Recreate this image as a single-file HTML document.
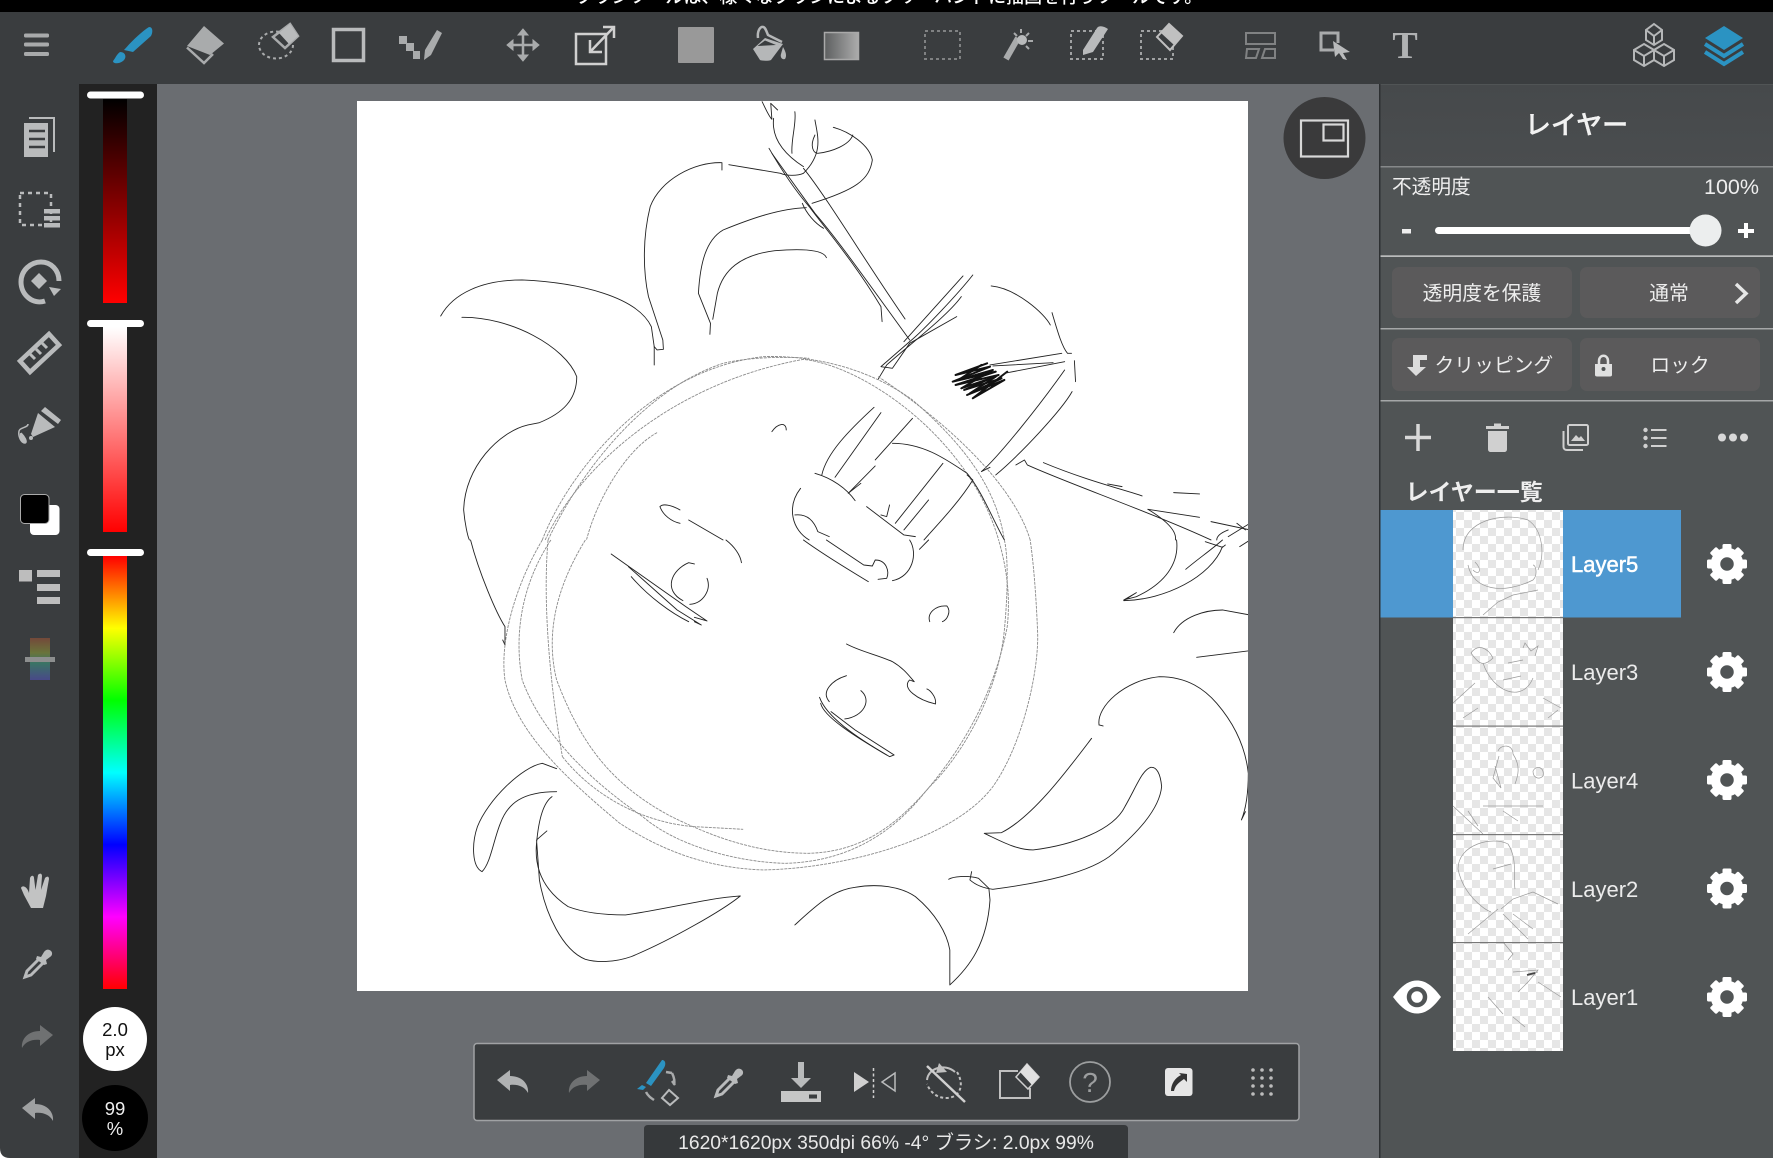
<!DOCTYPE html>
<html lang="ja"><head><meta charset="utf-8"><title>MediBang Paint</title>
<style>
html,body{margin:0;padding:0;background:#6a6d71;width:1773px;height:1158px;overflow:hidden}
svg{display:block;font-family:"Liberation Sans","Noto Sans CJK JP",sans-serif}
.sk path{vector-effect:non-scaling-stroke;fill:none;stroke:#222;stroke-width:.9;stroke-linecap:round;stroke-linejoin:round}
.sk path.g{stroke:#8a8a8a;stroke-width:.9;stroke-dasharray:3 1;stroke-linecap:butt}
.th path{fill:none;stroke:#9a9a9a;stroke-width:.7}
.ic{fill:#b9bbbc;stroke:none}
.ol{fill:none;stroke:#b9bbbc;stroke-width:3}
</style></head><body>
<svg width="1773" height="1158" viewBox="0 0 1773 1158" xmlns="http://www.w3.org/2000/svg">
<defs>
<linearGradient id="g1" x1="0" y1="0" x2="0" y2="1"><stop offset="0" stop-color="#000"/><stop offset="1" stop-color="#f00"/></linearGradient>
<linearGradient id="g2" x1="0" y1="0" x2="0" y2="1"><stop offset="0" stop-color="#fff"/><stop offset="1" stop-color="#f00"/></linearGradient>
<linearGradient id="g3" x1="0" y1="0" x2="0" y2="1"><stop offset="0" stop-color="#f00"/><stop offset=".1667" stop-color="#ff0"/><stop offset=".3333" stop-color="#0f0"/><stop offset=".5" stop-color="#0ff"/><stop offset=".6667" stop-color="#00f"/><stop offset=".8333" stop-color="#f0f"/><stop offset="1" stop-color="#f00"/></linearGradient>
<linearGradient id="g4" x1="0" y1="0" x2="0" y2="1"><stop offset="0" stop-color="#7a4a3a"/><stop offset=".35" stop-color="#6f7a3a"/><stop offset=".6" stop-color="#3a7a6a"/><stop offset="1" stop-color="#4a4a90"/></linearGradient>
<linearGradient id="g5" x1="0" y1="0" x2="1" y2="0"><stop offset="0" stop-color="#5d5f60"/><stop offset="1" stop-color="#acacac"/></linearGradient>
<linearGradient id="tb" x1="0" y1="0" x2="0" y2="1"><stop offset="0" stop-color="#46494b"/><stop offset="1" stop-color="#4a4d4f"/></linearGradient>
<pattern id="chk" width="16" height="16" patternUnits="userSpaceOnUse"><rect width="16" height="16" fill="#fff"/><rect width="8" height="8" fill="#e6e6e6"/><rect x="8" y="8" width="8" height="8" fill="#e6e6e6"/></pattern>
<clipPath id="cv"><rect x="357" y="101" width="891" height="890"/></clipPath>
<g id="gear" fill="#fff"><circle r="11.5" fill="none" stroke="#fff" stroke-width="9.5"/>
<rect x="-4.5" y="-20" width="9" height="7" rx="1.5"/><rect x="-4.5" y="-20" width="9" height="7" rx="1.5" transform="rotate(45)"/><rect x="-4.5" y="-20" width="9" height="7" rx="1.5" transform="rotate(90)"/><rect x="-4.5" y="-20" width="9" height="7" rx="1.5" transform="rotate(135)"/><rect x="-4.5" y="-20" width="9" height="7" rx="1.5" transform="rotate(180)"/><rect x="-4.5" y="-20" width="9" height="7" rx="1.5" transform="rotate(225)"/><rect x="-4.5" y="-20" width="9" height="7" rx="1.5" transform="rotate(270)"/><rect x="-4.5" y="-20" width="9" height="7" rx="1.5" transform="rotate(315)"/></g>
<path id="undo" d="M0 10 L13 0 L13 6 C25 6 32 14 31 23 C28 17 21 14 13 15 L13 21 Z"/>
<g id="dropper"><path d="M16 9 L3 22 L1 28 L7 26 L20 13" fill="none" stroke="#b9bbbc" stroke-width="3"/><path d="M13 7 L17 8 L20 3 C22 0 25 0 27 2 C29 4 28 7 26 8 L22 11 L23 15 L20 16 L12 10 Z" fill="#b9bbbc"/></g>
</defs>

<rect width="1773" height="1158" fill="#6a6d71"/>
<rect width="1773" height="12" fill="#000"/>
<text x="889" y="3" font-size="18" fill="#fff" text-anchor="middle" font-weight="500">ブラシツールは、様々なブラシによるフリーハンドに描画を行うツールです。</text>
<rect y="12" width="1773" height="72" fill="#3a3d3f"/>
<rect y="84" width="79" height="1074" fill="#3a3d3f"/>
<rect x="79" y="84" width="78" height="1074" fill="#222"/>

<!-- sliders -->
<rect x="103" y="99" width="24" height="204" fill="url(#g1)"/>
<rect x="103" y="327" width="24" height="205" fill="url(#g2)"/>
<rect x="103" y="556" width="24" height="433" fill="url(#g3)"/>
<rect x="87" y="91.5" width="57" height="7" rx="3.5" fill="#fff"/>
<rect x="87" y="320" width="57" height="7" rx="3.5" fill="#fff"/>
<rect x="87" y="549" width="57" height="7" rx="3.5" fill="#fff"/>
<circle cx="115" cy="1039" r="32" fill="#fff"/>
<text x="115" y="1036" font-size="18.5" text-anchor="middle" fill="#111">2.0</text>
<text x="115" y="1056" font-size="18.5" text-anchor="middle" fill="#111">px</text>
<circle cx="115" cy="1118" r="33" fill="#000"/>
<text x="115" y="1115" font-size="18.5" text-anchor="middle" fill="#eee">99</text>
<text x="115" y="1135" font-size="18.5" text-anchor="middle" fill="#eee">%</text>

<!-- canvas -->
<rect x="357" y="101" width="891" height="890" fill="#fff"/>
<g clip-path="url(#cv)" class="sk">
<g transform="translate(350 90) scale(.574 .3333)">
<path d="M718 35 C725 60 730 80 735 88 L733 40 L745 60"/>
<path d="M738 85 C735 130 745 180 790 230"/>
<path d="M775 65 C778 100 768 150 770 190"/>
<path d="M810 90 C815 140 825 190 790 250 C780 258 760 258 750 250 L660 224"/>
<path d="M648 240 L648 218 C600 215 540 270 523 350 C510 440 510 540 520 620 L545 750 L546 778 L535 780 L530 770 L530 825"/>
<path d="M842 112 C870 125 905 165 910 210 C905 270 880 300 805 340"/>
<path d="M810 135 C800 170 808 190 815 190 C840 185 870 165 876 135"/>
<path d="M730 175 C745 220 770 290 800 350 C830 420 880 520 925 650 L927 695"/>
<path d="M735 190 L760 250 L810 370 C850 450 895 560 975 750"/>
<path d="M790 235 C830 320 900 520 967 687"/>
<path d="M788 340 C795 370 810 400 825 415"/>
<path d="M795 353 C750 355 700 385 650 420 C620 450 610 520 607 610 L628 700 L627 733"/>
<path d="M830 503 C825 480 790 475 740 482 C680 495 650 540 640 610 L632 688"/>
<path d="M158 678 C180 610 230 570 300 570 C400 578 500 620 525 710 L530 770"/>
<path d="M195 682 C280 680 375 770 395 860 C395 930 370 970 330 998 L310 1005 C260 1025 200 1130 198 1260 C200 1300 205 1340 208 1350"/>
<path d="M1085 555 C1060 610 1000 720 975 755 L925 830 L945 835 L975 760 L1057 680"/>
<path d="M1068 558 L965 755"/>
<path d="M1065 620 C1040 680 970 770 935 825 L920 868"/>
<path d="M1117 588 C1160 595 1210 670 1220 705"/>
<path d="M1223 668 C1232 720 1240 770 1250 790 L1257 790"/>
<path d="M1262 812 L1264 875"/>
<path d="M1258 905 C1240 960 1170 1090 1125 1155"/>
<path d="M1245 840 C1200 950 1130 1100 1100 1145 L1115 1132"/>
<path style="stroke-width:2;stroke:#111" d="M1110 820 L1055 855 L1115 830 L1050 875 L1125 845 L1055 885 L1130 855 L1070 900 L1135 865 L1075 915 L1140 870 L1085 925 L1145 845"/>
<path style="stroke-width:2;stroke:#111" d="M1100 825 L1060 870 L1120 840 L1065 895 L1125 860 L1080 910"/>
<path d="M1115 825 L1240 790"/>
<path d="M1140 850 L1245 815"/>
<path d="M1120 828 L1225 818"/>
<path class="g" d="M335 1350 C380 1150 520 840 720 800 C800 795 900 830 980 930 C1060 1050 1125 1180 1140 1350"/>
<path class="g" d="M340 1350 C400 1130 560 880 790 808 C900 830 1080 1050 1130 1350"/>
<path class="g" d="M920 860 C1000 950 1150 1150 1185 1350"/>
<path class="g" d="M345 1350 C400 1150 510 900 650 820 C700 800 760 800 800 805"/>
<path d="M735 1025 C745 1000 760 995 760 1020"/>
<path class="g" d="M535 1028 C480 1080 430 1230 412 1350"/>
<path d="M913 952 C870 1020 830 1090 822 1155"/>
<path d="M925 968 L845 1162"/>
<path d="M915 1128 L868 1210 L890 1180"/>
<path d="M980 985 L915 1110"/>
<path d="M810 1150 C840 1165 865 1195 880 1232"/>
<path d="M945 1060 C1000 1060 1040 1110 1075 1150 C1100 1200 1120 1290 1140 1350"/>
<path d="M1033 1120 L950 1300"/>
<path d="M1075 1155 L1085 1170 C1060 1240 1020 1310 1000 1350"/>
<path d="M1008 1230 L965 1320"/>
<path d="M900 1250 L965 1335 L985 1340"/>
<path d="M940 1245 L935 1280 L925 1275"/>
<path d="M785 1195 C760 1250 770 1320 800 1350"/>
<path d="M775 1275 C800 1270 810 1300 815 1325 L835 1340"/>
<path d="M540 1250 C545 1240 560 1245 575 1260"/>
<path d="M540 1250 C545 1275 560 1295 575 1300"/>
<path d="M590 1290 L650 1350"/>
<path d="M1208 1118 C1280 1170 1350 1200 1380 1218"/>
<path d="M1160 1125 L1175 1110 L1180 1125 C1250 1180 1400 1270 1500 1350"/>
<path d="M1320 1182 L1345 1190"/>
<path d="M1435 1208 L1480 1212"/>
<path d="M1390 1258 L1480 1282"/>
<path d="M1500 1295 L1568 1320"/>
<path d="M1390 1258 C1430 1300 1440 1330 1438 1350"/>
<path d="M1530 1320 C1515 1330 1510 1340 1510 1350"/>
<path d="M1545 1300 L1560 1320"/>
<path d="M1568 1300 L1530 1340"/>
</g>
<g transform="translate(350 540) scale(.574 .3333)">
<path d="M210 0 C225 100 255 220 270 260 L270 315 L266 300"/>
<path class="g" d="M335 0 C290 130 260 300 270 420 C290 580 380 720 470 850 C560 950 640 985 720 990 C860 985 1050 900 1120 740 C1170 620 1200 400 1198 280 C1195 150 1190 60 1185 0"/>
<path class="g" d="M350 0 C300 130 285 280 300 420 C330 560 400 700 510 830 C570 920 680 968 760 970 C860 965 940 890 1000 760 C1060 640 1120 480 1145 260 C1152 150 1140 60 1130 0"/>
<path class="g" d="M410 0 C360 140 340 280 360 420 C400 600 450 730 560 830 C620 880 700 940 800 940 C890 935 950 860 1010 740 C1070 640 1130 450 1140 270 C1145 180 1148 60 1140 0"/>
<path class="g" d="M345 0 C335 200 350 450 370 650"/>
<path class="g" d="M370 650 C430 780 520 850 600 860 L685 868"/>
<path d="M455 42 L585 200 L622 243 L600 232"/>
<path d="M485 80 L570 210 L612 255 L600 245"/>
<path d="M490 110 C520 170 560 220 590 245"/>
<path d="M600 72 L590 68 C560 90 545 150 580 182"/>
<path d="M622 115 C630 150 615 190 592 193"/>
<path d="M655 0 C670 20 680 45 682 68"/>
<path d="M790 0 C830 50 870 90 903 125"/>
<path d="M830 0 L895 75 L910 78 L915 60 C935 60 940 95 935 115 L920 118"/>
<path d="M975 0 C990 40 980 110 945 122"/>
<path d="M1008 0 L992 28"/>
<path d="M1010 245 C1005 220 1020 195 1040 198 C1048 215 1040 240 1032 245"/>
<path d="M865 312 C890 335 920 345 945 365 C965 385 975 410 983 425 L975 420 C960 445 990 480 1020 492 C1022 470 1010 450 1005 447"/>
<path d="M865 407 C840 420 820 455 835 485"/>
<path d="M890 452 C910 480 895 530 862 537"/>
<path d="M818 472 C830 530 880 590 940 650 L948 645 L880 570 L838 515"/>
<path d="M820 490 C825 530 880 590 935 645"/>
<path d="M360 686 L335 670 C300 680 240 780 222 860 C212 910 212 980 230 995 C245 970 250 900 262 850 C275 790 300 755 360 755"/>
<path d="M352 770 C335 790 328 850 325 910 C320 1000 345 1060 380 1100 C410 1120 450 1125 480 1125 C560 1105 620 1075 680 1068 C650 1110 560 1200 490 1250 C460 1268 430 1268 410 1258 C370 1230 340 1120 330 1020 L325 900 L343 873"/>
<path d="M775 1155 C810 1100 840 1050 880 1042 C920 1030 960 1040 985 1070 C1020 1120 1040 1180 1045 1230 L1045 1335 C1080 1280 1110 1210 1115 1080 L1113 1045 L1095 1015 C1075 1005 1050 1010 1043 1018"/>
<path d="M1083 995 L1080 1020 C1090 1035 1105 1045 1120 1048 C1200 1030 1290 1000 1330 940 C1370 880 1410 810 1414 740 C1412 700 1405 680 1395 682 C1380 690 1370 740 1350 800 C1330 870 1260 915 1190 930 C1160 930 1130 900 1105 880 L1135 878 C1190 830 1250 690 1292 595"/>
<path d="M1305 555 L1312 558"/>
<path d="M1305 555 C1300 500 1350 420 1410 410 C1460 410 1490 450 1510 490 C1540 550 1560 620 1565 700 C1565 760 1560 810 1553 840 L1560 815"/>
<path d="M1435 278 C1450 230 1490 210 1520 210 L1568 225"/>
<path d="M1475 352 L1568 332"/>
<path d="M1440 0 C1445 70 1420 130 1370 170 L1348 180 L1370 158 L1348 182 C1420 180 1500 110 1520 20"/>
<path d="M1490 5 L1520 22 L1525 15"/>
<path d="M1520 0 C1500 30 1475 60 1456 88"/>
<path d="M1550 20 L1568 0"/>
</g>
</g>

<!-- navigator button -->
<circle cx="1324.500" cy="138" r="41" fill="#3a3a3b"/>
<rect x="1301" y="120.500" width="47" height="36" fill="none" stroke="#d8d8d8" stroke-width="2.200"/>
<rect x="1323.500" y="124.500" width="20" height="16" fill="none" stroke="#d8d8d8" stroke-width="2.200"/>

<!-- right panel -->
<rect x="1379" y="84" width="394" height="1074" fill="#505455"/>
<rect x="1379" y="84" width="1.500" height="1074" fill="#2d3032"/>
<rect x="1380.500" y="85" width="392.500" height="81" fill="url(#tb)"/>
<rect x="1380.500" y="166" width="392.500" height="1.500" fill="#86898a"/>
<text x="1576.500" y="134" font-size="26" font-weight="500" fill="#f2f2f2" stroke="#f2f2f2" stroke-width=".4" text-anchor="middle">レイヤー</text>
<text x="1392" y="193.500" font-size="19.700" fill="#eee">不透明度</text>
<text x="1759" y="194" font-size="21.500" fill="#eee" text-anchor="end">100%</text>
<rect x="1402" y="229" width="9" height="4.500" fill="#eee"/>
<rect x="1435" y="227" width="270" height="7" rx="3.500" fill="#fff"/>
<circle cx="1705.500" cy="230.500" r="16" fill="#eceeee"/>
<path d="M1746 223 V238 M1738 231 H1754" stroke="#fff" stroke-width="4" fill="none"/>
<rect x="1380.500" y="255.500" width="392.500" height="1.200" fill="#e8e8e8"/>
<rect x="1392" y="267" width="180" height="51" rx="7" fill="#5b5a5b"/>
<rect x="1580" y="267" width="180" height="51" rx="7" fill="#5b5a5b"/>
<text x="1482" y="300" font-size="19.800" fill="#eee" text-anchor="middle">透明度を保護</text>
<text x="1669" y="300" font-size="19.800" fill="#eee" text-anchor="middle">通常</text>
<path d="M1736 284 L1746 293.500 L1736 303" fill="none" stroke="#e6e6e6" stroke-width="3.500"/>
<rect x="1380.500" y="328" width="392.500" height="1.500" fill="#a5a7a8"/>
<rect x="1392" y="338" width="180" height="53" rx="7" fill="#5b5a5b"/>
<rect x="1580" y="338" width="180" height="53" rx="7" fill="#5b5a5b"/>
<path d="M1413 355 H1427 V360 H1420 V367 H1426 L1416 376 L1407 367 H1413 Z" fill="#dcdcdc"/>
<text x="1434.500" y="372" font-size="19.800" fill="#eee">クリッピング</text>
<path d="M1595 364 H1612 V375 C1612 376 1611 376.500 1610 376.500 H1597 C1596 376.500 1595 376 1595 375 Z" fill="#e0e0e0"/>
<path d="M1599 364 V361 C1599 354 1608 354 1608 361 V364" fill="none" stroke="#e0e0e0" stroke-width="2.500"/>
<circle cx="1603.500" cy="369" r="2" fill="#505455"/>
<text x="1680" y="372" font-size="19.800" fill="#eee" text-anchor="middle">ロック</text>
<rect x="1380.500" y="400" width="392.500" height="1.500" fill="#a5a7a8"/>

<!-- layer action icons -->
<path d="M1418 424 V451 M1405 437.500 H1431" stroke="#d8d8d8" stroke-width="3.500" fill="none"/>
<path d="M1486 426 H1509 V429 H1486 Z M1494 423.500 H1501 V426 H1494 Z M1488 431 H1507 V449 C1507 451 1506 452 1504 452 H1491 C1489 452 1488 451 1488 449 Z" fill="#d0d0d0"/>
<rect x="1568" y="425" width="20" height="20" rx="1.500" fill="none" stroke="#d0d0d0" stroke-width="2"/>
<path d="M1563.500 431 V447 C1563.500 449 1565 450 1567 450 H1583" fill="none" stroke="#d0d0d0" stroke-width="2"/>
<path d="M1571 441 L1576 435 L1579 438 L1581 436 L1585 441 Z" fill="#d0d0d0"/>
<g fill="#d0d0d0"><circle cx="1645.500" cy="430" r="2.200"/><circle cx="1645.500" cy="438" r="2.200"/><circle cx="1645.500" cy="446" r="2.200"/><rect x="1651" y="429" width="15.500" height="2"/><rect x="1651" y="437" width="15.500" height="2"/><rect x="1651" y="445" width="15.500" height="2"/></g>
<g fill="#d8d8d8"><circle cx="1722" cy="437.500" r="4"/><circle cx="1733" cy="437.500" r="4"/><circle cx="1744" cy="437.500" r="4"/></g>
<text x="1405.500" y="500" font-size="23" font-weight="700" fill="#eee">レイヤー一覧</text>

<!-- layer rows -->
<rect x="1380.500" y="510" width="300.500" height="107.500" fill="#4e98d0"/>
<rect x="1453" y="510" width="110" height="541" fill="url(#chk)"/>
<g class="th">
<g transform="translate(1453 510)"><path d="M10 40 C10 10 50 2 75 10 C90 20 92 45 85 60"/><path d="M15 55 C20 80 50 85 80 70 C85 65 83 55 80 55"/><path d="M30 105 L45 92 L60 85 L85 80"/><path d="M20 60 C26 66 30 60 22 52"/></g>
<g transform="translate(1453 618)"><path d="M18 35 C25 25 35 30 40 40 C30 50 25 45 18 35"/><path d="M70 30 L72 25 L78 33 L85 28 L82 38"/><path d="M30 45 C40 75 70 85 80 60"/><path d="M55 45 L70 42 M50 62 L68 58"/><path d="M0 85 L22 65 M10 100 L25 90 M90 80 L108 90 M95 100 L105 92"/></g>
<g transform="translate(1453 726)"><path d="M45 25 C48 18 60 18 60 28 C68 40 65 50 62 58"/><path d="M42 40 L48 62 L40 52 L46 30"/><path d="M80 45 C84 38 92 42 90 50 C86 54 80 52 80 45"/><path d="M0 80 L30 108 M15 85 L25 100"/><path d="M30 80 H90 M50 85 L65 95"/></g>
<g transform="translate(1453 834)"><path d="M5 35 C5 10 40 2 55 10 C65 25 60 45 62 55"/><path d="M5 35 C10 60 30 75 38 78"/><path d="M40 35 L58 30"/><path d="M48 75 L60 65 L80 58 L105 70"/><path d="M15 100 L45 75 M50 80 L75 105 M60 80 L80 95"/></g>
<g transform="translate(1453 942)"><path d="M50 0 L60 12 L55 18"/><path d="M60 30 L85 28 L75 40 L65 50"/><path d="M75 32 L85 30 M35 55 L50 72 M60 75 L72 85 M85 40 L108 55"/><path style="stroke:#444;stroke-width:1.800" d="M74 33 L82 31"/></g>
</g>
<g fill="#777"><rect x="1453" y="617" width="110" height="1.200"/><rect x="1453" y="725.500" width="110" height="1.200"/><rect x="1453" y="834" width="110" height="1.200"/><rect x="1453" y="942" width="110" height="1.200"/></g>
<text x="1571" y="572" font-size="22" fill="#fff" stroke="#fff" stroke-width=".5">Layer5</text>
<text x="1571" y="680" font-size="22" fill="#ececec">Layer3</text>
<text x="1571" y="788.500" font-size="22" fill="#ececec">Layer4</text>
<text x="1571" y="897" font-size="22" fill="#ececec">Layer2</text>
<text x="1571" y="1005" font-size="22" fill="#ececec">Layer1</text>
<use href="#gear" x="1727" y="564"/><use href="#gear" x="1727" y="672"/><use href="#gear" x="1727" y="780"/><use href="#gear" x="1727" y="888.500"/><use href="#gear" x="1727" y="997"/>
<path d="M1393 997 C1402 985 1409 980.500 1417 980.500 C1425 980.500 1432 985 1441 997 C1432 1009 1425 1013.500 1417 1013.500 C1409 1013.500 1402 1009 1393 997 Z" fill="#fff"/>
<circle cx="1417" cy="997" r="8" fill="none" stroke="#505455" stroke-width="4.500"/>

<!-- top toolbar icons -->
<g fill="#a8aaab"><rect x="24" y="33.500" width="25" height="4" rx="1.500"/><rect x="24" y="42.500" width="25" height="4" rx="1.500"/><rect x="24" y="52" width="25" height="4" rx="1.500"/></g>
<path d="M149 27 C153 27 153 32 151 36 L133 52 L124 50 C131 42 141 32 149 27 Z M120 52 C126 52 127 58 123 61 C119 64 113 64 113 61 C115 59 116 55 120 52 Z" fill="#2b93c2"/>
<path d="M204 26 L224 43.500 L210 55 L187 46 Z" fill="#a9abac"/>
<path d="M187 47.500 L204 63 L213 54" fill="none" stroke="#a9abac" stroke-width="2.500"/>
<ellipse cx="276" cy="45" rx="17" ry="13.500" fill="none" stroke="#a9abac" stroke-width="2" stroke-dasharray="3 3"/>
<path d="M290 24 L298 36 L285 48 L273 37 Z" fill="#3a3d3f" stroke="#a9abac" stroke-width="2.500"/>
<path d="M290 24 L298 36 L289 44 L279 33 Z" fill="#b9bbbc"/>
<rect x="333.500" y="29.500" width="30" height="31" fill="none" stroke="#b9bbbc" stroke-width="3.500"/>
<g fill="#a9abac"><rect x="399" y="36" width="8" height="8"/><rect x="406" y="43" width="8" height="8"/><rect x="413" y="51" width="7" height="8"/></g>
<path d="M425 50 L437 30 L442 33 L431 55 L424 60 Z" fill="#a9abac"/>
<path d="M523 29 L518 35 H528 Z M523 61 L518 55 H528 Z M507 45 L513 40 V50 Z M539 45 L533 40 V50 Z" fill="#a9abac" stroke="#a9abac"/>
<path d="M523 33 V57 M511 45 H535" stroke="#a9abac" stroke-width="2.500"/>
<rect x="576" y="34" width="30" height="30" fill="none" stroke="#d0d0d0" stroke-width="2.500"/>
<path d="M590 52 L613 28 M603 27 H614 V38 M590 40 V52 H602" fill="none" stroke="#d0d0d0" stroke-width="2.500"/>
<rect x="678" y="27" width="36" height="36" rx="1" fill="#999"/>
<path d="M753 49 L765 38 L783 44 L771 60 C769 61 762 61 760 60 Z" fill="#b5b7b8"/>
<path d="M757.500 46 L765 40.500 L776 45 Z" fill="#3a3d3f"/>
<path d="M758 38 C757 30 761 26 763 27 C765 27 766 30 768 35 L782 42" fill="none" stroke="#b5b7b8" stroke-width="2.500"/>
<path d="M783 47 C786 52 787 56 785 59 C782 60 780 57 781 54 Z" fill="#b5b7b8"/>
<rect x="824.500" y="32.500" width="34" height="27" fill="url(#g5)" stroke="#a9a9a9" stroke-width="1.500"/>
<rect x="925" y="31" width="35" height="28" fill="none" stroke="#808283" stroke-width="2" stroke-dasharray="3 3"/>
<path d="M1006 59 L1018 38" stroke="#a9abac" stroke-width="6" fill="none"/>
<circle cx="1022" cy="40" r="5" fill="#b9bbbc"/>
<path d="M1021 29 V33 M1029 33 L1026 36 M1033 41 H1028 M1029 49 L1026 46 M1014 33 L1017 36" stroke="#a9abac" stroke-width="2" fill="none"/>
<rect x="1071" y="31" width="32" height="28" fill="none" stroke="#a0a2a3" stroke-width="2" stroke-dasharray="3 3"/>
<path d="M1083 50 L1097 28 C1099 25 1104 26 1108 29 L1093 52 L1083 55 Z" fill="#b9bbbc"/>
<rect x="1141" y="31" width="32" height="28" fill="none" stroke="#a0a2a3" stroke-width="2" stroke-dasharray="3 3"/>
<path d="M1169 24 L1182 36 L1170 50 L1157 37 Z" fill="#3a3d3f" stroke="#c0c0c0" stroke-width="2"/>
<path d="M1169 24 L1182 36 L1174 45 L1161 33 Z" fill="#c0c0c0"/>
<rect x="1246" y="33" width="29" height="11" fill="none" stroke="#808283" stroke-width="2"/>
<path d="M1247 49 H1259 L1256 58 H1246 Z M1265 49 H1275 V58 H1262 Z" fill="none" stroke="#808283" stroke-width="2"/>
<path d="M1338 43 V33 H1321 V50 H1334" fill="none" stroke="#a9abac" stroke-width="3"/>
<path d="M1333 41 L1350 52 L1343 53 L1347 60 L1343 59 L1339 53 L1335 57 Z" fill="#b9bbbc"/>
<text x="1405" y="58" font-size="38" font-weight="700" fill="#b0b2b3" text-anchor="middle" style="font-family:'Liberation Serif',serif">T</text>
<g fill="none" stroke="#b5b7b8" stroke-width="2">
<path d="M1654 24 L1662 30 V40 L1654 45 L1646 40 V30 Z M1646 30 L1654 36 L1662 30 M1654 36 V45"/>
<path d="M1644 44 L1654 50 V60 L1644 66 L1634 60 V50 Z M1634 50 L1644 56 L1654 50 M1644 56 V66"/>
<path d="M1664 44 L1674 50 V60 L1664 66 L1654 60 V50 Z M1654 50 L1664 56 L1674 50 M1664 56 V66"/>
</g>
<path d="M1724 26 L1743 38 L1724 50 L1705 38 Z" fill="#2b93c2"/>
<path d="M1705 44 L1724 56 L1743 44 M1705 52 L1724 64 L1743 52" fill="none" stroke="#2b93c2" stroke-width="4"/>

<!-- left toolbar icons -->
<path d="M24 123 H48 V157 H24 Z" fill="#b9bbbc"/>
<path d="M29 118 H54 V152" fill="none" stroke="#b9bbbc" stroke-width="2"/>
<path d="M29 131 H45 M29 139 H45 M29 147 H45" stroke="#3a3d3f" stroke-width="2.500"/>
<rect x="20" y="193" width="31" height="32" fill="none" stroke="#b9bbbc" stroke-width="2.500" stroke-dasharray="4 4"/>
<g fill="#b9bbbc"><rect x="44" y="209" width="16" height="4.500"/><rect x="44" y="216" width="16" height="4.500"/><rect x="44" y="223" width="16" height="4.500"/></g>
<path d="M45 301 C33 305 21 295 21 282 C21 270 31 262 41 262 C51 262 59 270 59 281" fill="none" stroke="#b9bbbc" stroke-width="5"/>
<path d="M49 287 L61 289 L54 296 Z" fill="#b9bbbc"/>
<path d="M39 273 L47 281 L39 289 L31 281 Z" fill="#b9bbbc"/>
<path d="M20 361 L49 334 L59 345 L30 372 Z" fill="none" stroke="#b9bbbc" stroke-width="4.500"/>
<path d="M30 354 L35 359 M36 349 L41 354 M42 343 L47 348" stroke="#b9bbbc" stroke-width="3"/>
<path d="M45 407 L61 420 L58 424 L41 411 Z M38 413 L55 427 L33 437 L31 434 Z" fill="#b9bbbc"/>
<circle cx="31" cy="438" r="2" fill="#b9bbbc"/>
<path d="M28 424 C28 428 20 427 19 431 C18 436 21 443 25 443 C28 442 24 436 21 433" fill="none" stroke="#b9bbbc" stroke-width="1.500"/>
<path d="M20 433 C24 434 27 440 25 443 C21 443 19 438 20 433 Z" fill="#b9bbbc"/>
<rect x="30" y="505" width="29.500" height="30" rx="4" fill="#fff"/>
<rect x="20.500" y="494.500" width="28.500" height="29" rx="4" fill="#000" stroke="#aaa"/>
<g fill="#bdbdbd"><rect x="19" y="570" width="13" height="11.500"/><rect x="37" y="570" width="23" height="7"/><rect x="37" y="584" width="23" height="7"/><rect x="37" y="597" width="23" height="7"/></g>
<rect x="30" y="638" width="20" height="42" fill="url(#g4)" opacity=".9"/>
<rect x="25" y="657" width="30" height="5" fill="#8d8f8f"/>
<path d="M31 908 L24 895 L21 888 C22 885 27 886 29 893 L30 878 C31 875 34 875 34 878 L35.500 890 L38 875 C39.500 873 42 873 42 876 L41 890 L45 878 C47 876 49 876 49 879 L46 896 C45 900 44 904 43 908 Z" fill="#c2c3c3"/>
<use href="#dropper" x="24" y="949"/>
<use href="#undo" transform="translate(53 1025) scale(-1 1)" fill="#6f7172"/>
<use href="#undo" x="22" y="1098" fill="#9fa1a2"/>
<path d="M0 1148 Q0 1158 10 1158 H0 Z" fill="#fff"/>

<!-- bottom toolbar -->
<rect x="474" y="1043.500" width="825" height="77" rx="3" fill="#3a3d3f" stroke="#a0a2a4" stroke-width="1.500"/>
<use href="#undo" x="497" y="1070" fill="#b0b2b3"/>
<use href="#undo" transform="translate(600 1070) scale(-1 1)" fill="#6f7172"/>
<path d="M662 1060 C666 1060 666 1065 664 1068 L651 1086 L646 1083 Z M642 1085 L646 1087 L643 1090 L637 1089 Z" fill="#2b93c2"/>
<path d="M672 1073 C674 1077 675 1081 674 1085 M646 1092 C648 1096 651 1098 654 1100 M666 1072 L672 1073 M672 1081 L675 1085" fill="none" stroke="#a9abac" stroke-width="2.500"/>
<path d="M669 1090 L678 1098 L670 1105 L662 1098 Z" fill="none" stroke="#b9bbbc" stroke-width="2"/>
<use href="#dropper" x="715" y="1068"/>
<path d="M798 1062 H804 V1078 H811 L801 1088 L791 1078 H798 Z" fill="#b9bbbc"/>
<rect x="781" y="1091" width="40" height="11" fill="#c5c6c6"/>
<rect x="809" y="1094.500" width="8" height="4" fill="#3a3d3f"/>
<path d="M854 1072 L869 1082 L854 1092 Z" fill="#d0d0d0"/>
<path d="M873.500 1068 V1098" stroke="#d0d0d0" stroke-width="1.500" stroke-dasharray="3 2.500"/>
<path d="M895 1073 L882 1082 L895 1091 Z" fill="none" stroke="#b9bbbc" stroke-width="1.500"/>
<path d="M955 1072 C945 1063 928 1068 927 1080" fill="none" stroke="#c0c0c0" stroke-width="2"/>
<path d="M957 1072 C965 1085 960 1098 946 1098 C937 1098 930 1092 927 1084" fill="none" stroke="#c0c0c0" stroke-width="2" stroke-dasharray="3 2.500"/>
<path d="M927 1066 L965 1102" stroke="#d0d0d0" stroke-width="2.500"/>
<path d="M939 1063 L947 1072 L936 1073 Z" fill="#c0c0c0"/>
<path d="M1018 1071 H1000 V1098 H1030 V1088" fill="none" stroke="#c0c0c0" stroke-width="2"/>
<path d="M1027 1064 L1039 1077 L1028 1089 L1016 1077 Z" fill="#3a3d3f" stroke="#d0d0d0" stroke-width="1.500"/>
<path d="M1027 1064 L1039 1077 L1032 1085 L1020 1072 Z" fill="#e0e0e0"/>
<circle cx="1090" cy="1082" r="20" fill="none" stroke="#9c9e9f" stroke-width="1.800"/>
<text x="1090" y="1092" font-size="28" fill="#9c9e9f" text-anchor="middle">?</text>
<rect x="1165" y="1068" width="27.500" height="28" rx="3" fill="#e6e6e6"/>
<path d="M1187 1074 L1187 1082 L1184 1079 C1178 1083 1175 1086 1174 1091 L1171 1091 C1171 1084 1175 1078 1181 1075 L1179 1073 Z" fill="#333"/>
<g fill="#bcbcbc"><circle cx="1253" cy="1070" r="1.800"/><circle cx="1262" cy="1070" r="1.800"/><circle cx="1271" cy="1070" r="1.800"/><circle cx="1253" cy="1078" r="1.800"/><circle cx="1262" cy="1078" r="1.800"/><circle cx="1271" cy="1078" r="1.800"/><circle cx="1253" cy="1086" r="1.800"/><circle cx="1262" cy="1086" r="1.800"/><circle cx="1271" cy="1086" r="1.800"/><circle cx="1253" cy="1094" r="1.800"/><circle cx="1262" cy="1094" r="1.800"/><circle cx="1271" cy="1094" r="1.800"/></g>
<path d="M644 1129 Q644 1125 648 1125 H1124 Q1128 1125 1128 1129 V1158 H644 Z" fill="#36393b"/>
<text x="886" y="1149" font-size="19.300" fill="#e8e8e8" text-anchor="middle">1620*1620px 350dpi 66% -4° ブラシ: 2.0px 99%</text>
</svg>
</body></html>
